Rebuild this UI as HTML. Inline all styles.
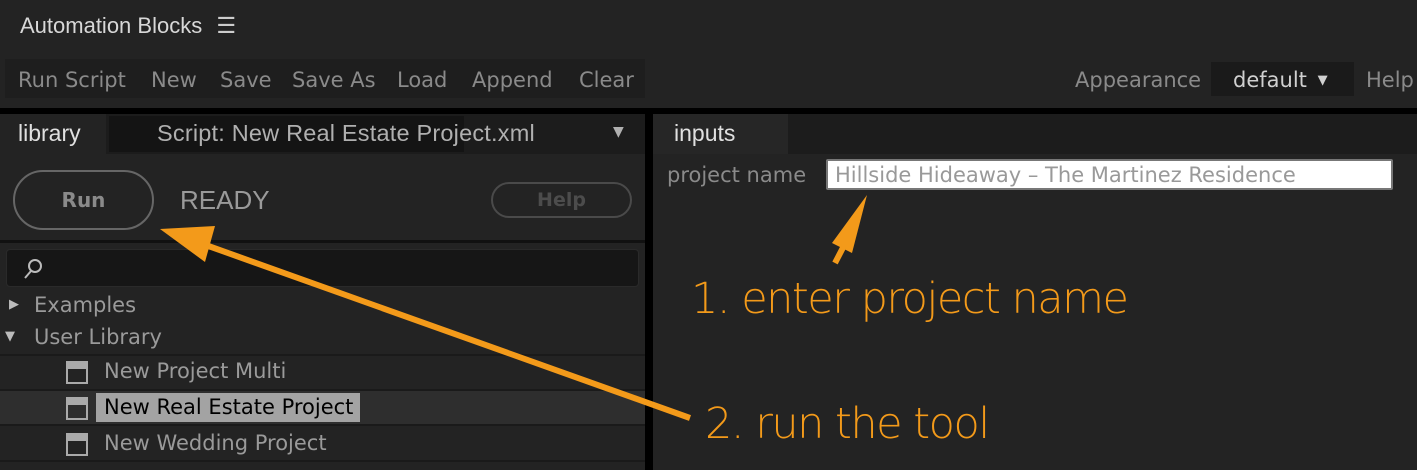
<!DOCTYPE html>
<html><head><style>
*{margin:0;padding:0;box-sizing:border-box}
body{width:1417px;height:470px;background:#232323;font-family:"DejaVu Sans","Liberation Sans",sans-serif;position:relative;overflow:hidden;color:#9a9a9a}
.a{position:absolute;white-space:nowrap}
.t{position:absolute;top:68px;font-size:21px;color:#8a8a8a;white-space:nowrap}
</style></head><body>
<div class="a" style="left:20px;top:13px;font-size:22px;color:#d8d8d8;font-family:'Liberation Sans',sans-serif">Automation Blocks <span style="margin-left:8px;color:#ccc">☰</span></div>
<div class="a" style="left:5px;top:59px;width:640px;height:39px;background:#1e1e1e"></div>
<div class="t" style="left:18px">Run Script</div>
<div class="t" style="left:151px">New</div>
<div class="t" style="left:220px">Save</div>
<div class="t" style="left:292px">Save As</div>
<div class="t" style="left:397px">Load</div>
<div class="t" style="left:472px">Append</div>
<div class="t" style="left:579px">Clear</div>
<div class="t" style="left:1075px">Appearance</div>
<div class="a" style="left:1211px;top:62px;width:143px;height:34px;background:#1a1a1a"></div>
<div class="a" style="left:1233px;top:68px;font-size:21px;color:#d0d0d0">default <span style="font-size:13px;position:relative;top:-3px;margin-left:4px">▼</span></div>
<div class="t" style="left:1366px">Help</div>
<div class="a" style="left:0;top:108px;width:1417px;height:6px;background:#000"></div>
<div class="a" style="left:645px;top:108px;width:8px;height:362px;background:#000"></div>
<div class="a" style="left:0;top:114px;width:645px;height:40px;background:#1c1c1c"></div>
<div class="a" style="left:0;top:114px;width:106px;height:40px;background:#232323"></div>
<div class="a" style="left:109px;top:116px;width:355px;height:36px;background:#141414"></div>
<div class="a" style="left:18px;top:120px;font-size:23px;color:#e0e0e0;font-family:'Liberation Sans',sans-serif">library</div>
<div class="a" style="left:157px;top:120px;font-size:23.5px;color:#b0b0b0;font-family:'Liberation Sans',sans-serif;letter-spacing:0.2px">Script: New Real Estate Project.xml</div>
<div class="a" style="left:613px;top:124px;font-size:14px;color:#b0b0b0">▼</div>
<div class="a" style="left:13px;top:170px;width:141px;height:60px;border:2px solid #666;border-radius:30px;text-align:center;line-height:56px;font-size:20px;font-weight:bold;color:#8a8a8a">Run</div>
<div class="a" style="left:180px;top:185px;font-size:26px;color:#9a9a9a;font-family:'Liberation Sans',sans-serif">READY</div>
<div class="a" style="left:491px;top:182px;width:141px;height:36px;border:2px solid #4a4a4a;border-radius:18px;text-align:center;line-height:32px;font-size:19px;font-weight:bold;color:#4c4c4c">Help</div>
<div class="a" style="left:0;top:240px;width:645px;height:3px;background:#111"></div>
<div class="a" style="left:6px;top:249px;width:633px;height:38px;background:#161616;border:1px solid #2a2a2a;border-radius:4px"></div>
<svg class="a" style="left:20px;top:256px" width="28" height="26"><circle cx="15" cy="10" r="6" fill="none" stroke="#bbb" stroke-width="2"/><line x1="11" y1="15" x2="5" y2="22" stroke="#bbb" stroke-width="2"/></svg>
<div class="a" style="left:9px;top:297px;font-size:13px;color:#bbb">▶</div>
<div class="a" style="left:34px;top:293px;font-size:21px;color:#9a9a9a">Examples</div>
<div class="a" style="left:5px;top:329px;font-size:13px;color:#bbb">▼</div>
<div class="a" style="left:34px;top:325px;font-size:21px;color:#9a9a9a">User Library</div>
<div class="a" style="left:0;top:354px;width:645px;height:2px;background:#1a1a1a"></div>
<div class="a" style="left:0;top:389px;width:645px;height:37px;background:#2e2e2e;border-top:2px solid #1a1a1a;border-bottom:2px solid #1a1a1a"></div>
<div class="a" style="left:0;top:460px;width:645px;height:2px;background:#1a1a1a"></div>
<div class="a" style="left:96px;top:393px;height:29px;background:#a3a3a3;width:264px"></div>
<div class="a" style="left:66px;top:361px;width:22px;height:23px;border:2px solid #aaa;border-top-width:8px"></div>
<div class="a" style="left:66px;top:397px;width:22px;height:23px;border:2px solid #aaa;border-top-width:8px"></div>
<div class="a" style="left:66px;top:433px;width:22px;height:23px;border:2px solid #aaa;border-top-width:8px"></div>
<div class="a" style="left:104px;top:359px;font-size:21px;color:#9a9a9a">New Project Multi</div>
<div class="a" style="left:104px;top:395px;font-size:21px;color:#000">New Real Estate Project</div>
<div class="a" style="left:104px;top:431px;font-size:21px;color:#9a9a9a">New Wedding Project</div>
<div class="a" style="left:653px;top:114px;width:764px;height:40px;background:#1c1c1c"></div>
<div class="a" style="left:653px;top:114px;width:135px;height:40px;background:#262626"></div>
<div class="a" style="left:674px;top:120px;font-size:23px;color:#e0e0e0;font-family:'Liberation Sans',sans-serif">inputs</div>
<div class="a" style="left:667px;top:163px;font-size:21px;color:#8a8a8a">project name</div>
<div class="a" style="left:826px;top:159px;width:567px;height:31px;background:#fff;border:2px solid #777;border-radius:2px"></div>
<div class="a" style="left:835px;top:163px;font-size:21px;color:#999">Hillside Hideaway – The Martinez Residence</div>
<div class="a" style="left:691px;top:274px;font-size:43px;color:#f39a1a;font-family:'DejaVu Sans',sans-serif;font-weight:200;letter-spacing:-1.5px">1. enter project name</div>
<div class="a" style="left:705px;top:399px;font-size:43px;color:#f39a1a;font-family:'DejaVu Sans',sans-serif;font-weight:200;letter-spacing:-1.5px">2. run the tool</div>
<svg class="a" style="left:0;top:0" width="1417" height="470">
<line x1="835" y1="263" x2="848" y2="238" stroke="#f39a1a" stroke-width="6"/>
<polygon points="867,195 852,253 832,243" fill="#f39a1a"/>
<line x1="690" y1="418" x2="200" y2="243" stroke="#f39a1a" stroke-width="6"/>
<polygon points="160,229 215,226 205,262" fill="#f39a1a"/>
</svg>
</body></html>
